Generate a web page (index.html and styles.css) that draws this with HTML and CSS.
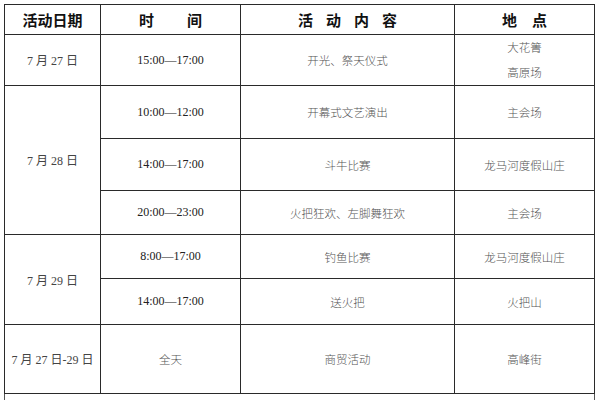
FILE: index.html
```html
<!DOCTYPE html>
<html lang="zh">
<head>
<meta charset="utf-8">
<link rel="stylesheet" href="styles.css">
</head>
<body>
<div class="page">
<table class="sched">
  <colgroup>
    <col class="c1"><col class="c2"><col class="c3"><col class="c4">
  </colgroup>
  <thead>
    <tr class="r-head">
      <th>活动日期</th>
      <th><span class="sp-time">时间</span></th>
      <th><span class="sp-act">活动内容</span></th>
      <th><span class="sp-loc">地点</span></th>
    </tr>
  </thead>
  <tbody>
    <tr class="r1">
      <td class="date">7 月 27 日</td>
      <td class="time">15:00—17:00</td>
      <td class="zh">开光、祭天仪式</td>
      <td class="zh two">大花箐<br>高原场</td>
    </tr>
    <tr class="r2">
      <td class="date" rowspan="3">7 月 28 日</td>
      <td class="time">10:00—12:00</td>
      <td class="zh">开幕式文艺演出</td>
      <td class="zh">主会场</td>
    </tr>
    <tr class="r3">
      <td class="time">14:00—17:00</td>
      <td class="zh">斗牛比赛</td>
      <td class="zh">龙马河度假山庄</td>
    </tr>
    <tr class="r4">
      <td class="time">20:00—23:00</td>
      <td class="zh">火把狂欢、左脚舞狂欢</td>
      <td class="zh">主会场</td>
    </tr>
    <tr class="r5">
      <td class="date" rowspan="2">7 月 29 日</td>
      <td class="time">8:00—17:00</td>
      <td class="zh">钓鱼比赛</td>
      <td class="zh">龙马河度假山庄</td>
    </tr>
    <tr class="r6">
      <td class="time">14:00—17:00</td>
      <td class="zh">送火把</td>
      <td class="zh">火把山</td>
    </tr>
    <tr class="r7">
      <td class="date">7 月 27 日-29 日</td>
      <td class="zh">全天</td>
      <td class="zh">商贸活动</td>
      <td class="zh">高峰街</td>
    </tr>
    <tr class="r8">
      <td class="open first"></td>
      <td class="open"></td>
      <td class="open"></td>
      <td class="open last"></td>
    </tr>
  </tbody>
</table>
</div>
</body>
</html>
```

FILE: styles.css
```css
html, body {
  margin: 0;
  padding: 0;
  background: #ffffff;
}
.page {
  width: 600px;
  height: 400px;
  overflow: hidden;
  padding: 4px 0 0 4px;
  box-sizing: border-box;
}
.sched {
  border-collapse: collapse;
  table-layout: fixed;
  width: 591px;
  font-family: "Liberation Serif", "Noto Sans CJK SC", serif;
}
.c1 { width: 96px; }
.c2 { width: 140px; }
.c3 { width: 214px; }
.c4 { width: 140px; }
.sched th, .sched td {
  border: 1.5px solid #2a2a2a;
  padding: 0;
  text-align: center;
  vertical-align: middle;
}
.sched th {
  font-family: "Noto Sans CJK SC", sans-serif;
  font-weight: 700;
  font-size: 15px;
  color: #111;
  line-height: 18px;
}
.sp-time { letter-spacing: 33px; padding-left: 33px; }
.sp-act { letter-spacing: 13px; padding-left: 13px; }
.sp-loc { letter-spacing: 15px; padding-left: 15px; }
.r-head { height: 30px; }
.r1 { height: 51px; }
.r2 { height: 53px; }
.r3 { height: 52px; }
.r4 { height: 44px; }
.r5 { height: 44px; }
.r6 { height: 46px; }
.r7 { height: 69px; }
.r8 { height: 12px; }
.sched td.open {
  border-bottom: hidden;
  border-left: hidden;
  border-right: hidden;
  border-top: 1.5px solid #2a2a2a;
}
.sched td.open.first { border-left: 1.5px solid #555; }
.sched td.open.last { border-right: 1.5px solid #555; }
.date {
  font-family: "Liberation Serif", "Noto Sans CJK SC", serif;
  font-size: 12px;
  color: #444;
}
.time {
  font-family: "Liberation Serif", serif;
  font-size: 12px;
  color: #222;
}
.zh {
  font-family: "Noto Sans CJK SC", sans-serif;
  font-size: 11.5px;
  font-weight: 300;
  color: #555;
}
.two { line-height: 25px; }
```
